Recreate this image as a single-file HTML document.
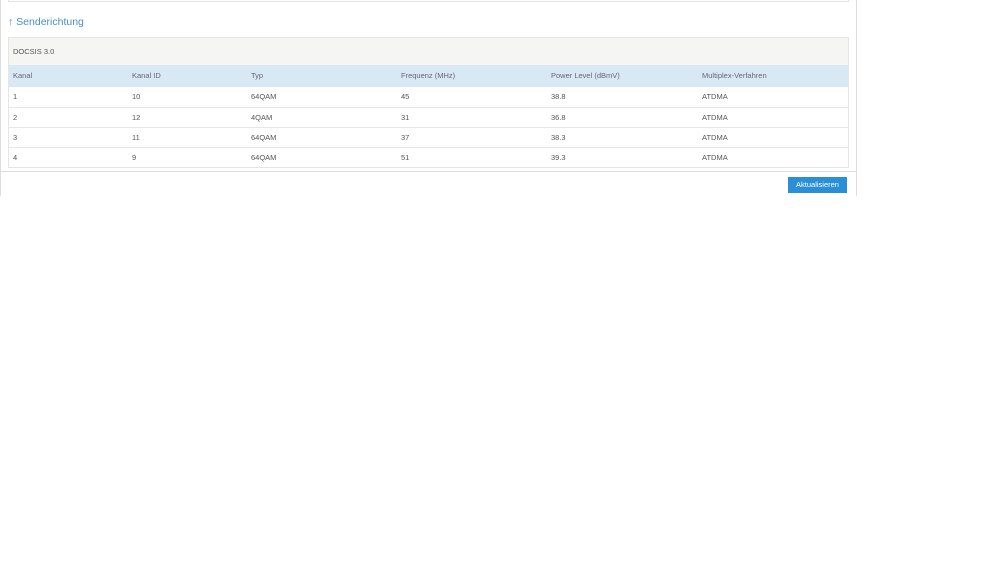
<!DOCTYPE html><html><head><style>
body{margin:0;width:999px;height:562px;background:#fff;font-family:"Liberation Sans",sans-serif;position:relative;overflow:hidden}
.a{position:absolute}
.r{position:relative;height:19px;border-top:1px solid #e6e6e6;font-size:7.5px;color:#555;line-height:19px}
.r span{position:absolute;top:0}
.h{border-top:none;height:22px;line-height:22px;background:#d9e8f5;color:#667}
</style></head><body>
<div class="a" style="left:0;top:0;width:857px;height:196px;border-left:1px solid #ddd;border-right:1px solid #ddd;box-sizing:border-box"></div>
<div class="a" style="left:8px;top:0;width:841px;height:2px;border:1px solid #e5e5e5;border-top:none;box-sizing:border-box"></div>
<div class="a" style="left:8px;top:16px;font-size:10.5px;color:#4a8ec2">↑ Senderichtung</div>
<div class="a" style="left:8px;top:37px;width:841px;height:131px;border:1px solid #e5e5e5;box-sizing:border-box;overflow:hidden">
<div style="height:27px;background:#f5f5f3;font-size:7.5px;color:#555;line-height:27px;padding-left:4px">DOCSIS 3.0</div>
<div class="r h"><span style="left:4px">Kanal</span><span style="left:123px">Kanal ID</span><span style="left:242px">Typ</span><span style="left:392px">Frequenz (MHz)</span><span style="left:542px">Power Level (dBmV)</span><span style="left:693px">Multiplex-Verfahren</span></div>
<div class="r" style="border-top:none;height:20px"><span style="left:4px">1</span><span style="left:123px">10</span><span style="left:242px">64QAM</span><span style="left:392px">45</span><span style="left:542px">38.8</span><span style="left:693px">ATDMA</span></div>
<div class="r"><span style="left:4px">2</span><span style="left:123px">12</span><span style="left:242px">4QAM</span><span style="left:392px">31</span><span style="left:542px">36.8</span><span style="left:693px">ATDMA</span></div>
<div class="r"><span style="left:4px">3</span><span style="left:123px">11</span><span style="left:242px">64QAM</span><span style="left:392px">37</span><span style="left:542px">38.3</span><span style="left:693px">ATDMA</span></div>
<div class="r"><span style="left:4px">4</span><span style="left:123px">9</span><span style="left:242px">64QAM</span><span style="left:392px">51</span><span style="left:542px">39.3</span><span style="left:693px">ATDMA</span></div>
</div>
<div class="a" style="left:0;top:171px;width:857px;height:1px;background:#ddd"></div>
<div class="a" style="left:788px;top:177px;width:59px;height:16px;background:#2b8fd8;color:#fff;font-size:7.5px;line-height:16px;text-align:center">Aktualisieren</div>
</body></html>
